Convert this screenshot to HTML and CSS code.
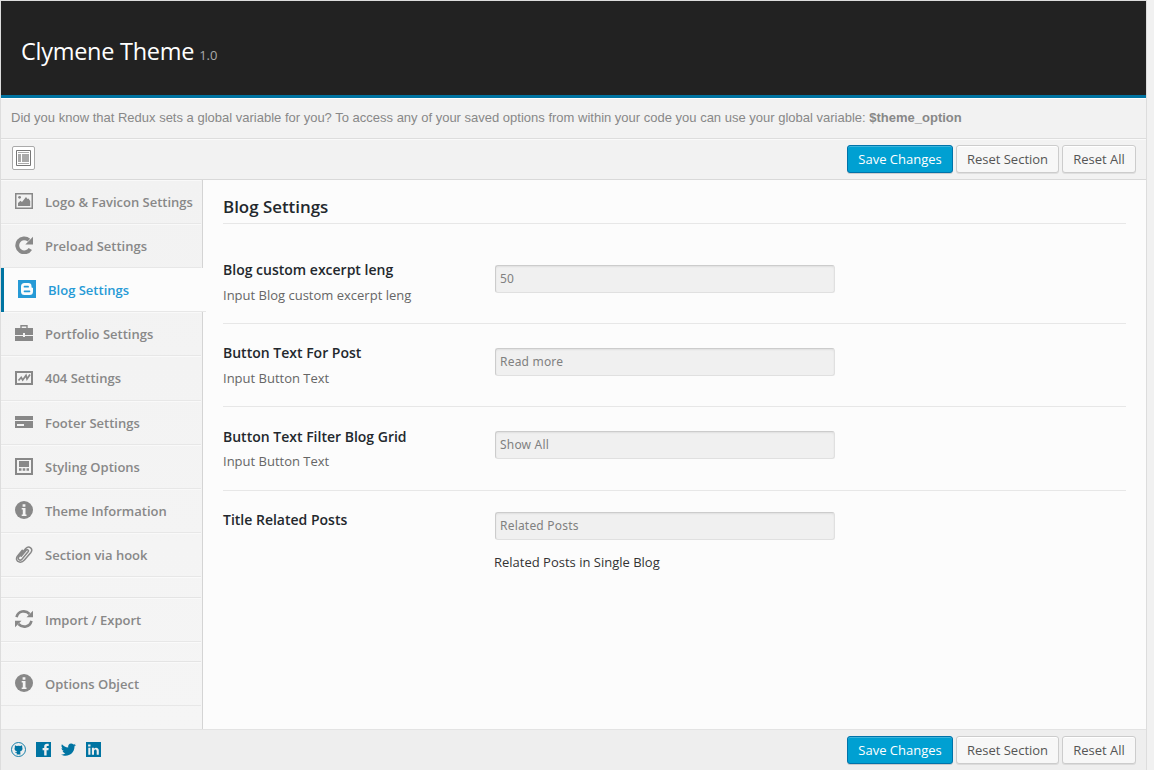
FILE: index.html
```html
<!DOCTYPE html>
<html lang="en">
<head>
<meta charset="utf-8">
<title>Clymene Theme</title>
<link rel="stylesheet" href="styles.css">
</head>
<body>
<svg class="defs" width="0" height="0">
  <symbol id="info" viewBox="0 0 18 18"><circle cx="9" cy="9" r="9" fill="currentColor"/><path d="M7.6 3.3h2.8v2.4H7.6zM6.7 7h3.8v6.5h1V15H6.7v-1.5h1.1V8.5H6.7z" fill="#f4f4f4"/></symbol>
</svg>
<div class="panel">
  <header class="header"><h1 class="title">Clymene Theme</h1><span class="version">1.0</span></header>
  <div class="notice">Did you know that Redux sets a global variable for you? To access any of your saved options from within your code you can use your global variable: <strong>$theme_option</strong></div>
  <div class="toolbar">
    <button class="expand" aria-label="Expand"><svg width="15" height="16" viewBox="0 0 15 16"><path d="M.5.5h14v15H.5z" fill="#fff" stroke="#777"/><path d="M2 2.5h11M2 13.5h11" stroke="#aaa"/><path d="M2 4h3v8H2zM6 4h7v8H6z" fill="#aaa"/></svg></button>
    <div class="actions"><button class="btn primary save">Save Changes</button><button class="btn section">Reset Section</button><button class="btn all">Reset All</button></div>
  </div>
  <div class="body">
    <nav class="sidebar">
      <a class="item"><svg class="icon" viewBox="0 0 18 18"><path d="M.75 1.75h16.5v14.5H.75z" fill="none" stroke="currentColor" stroke-width="1.5"/><circle cx="4.6" cy="5.3" r="1.4" fill="currentColor"/><path d="M3 14v-3l2.5-2.2L7 10l4-5 1.5 2 1-.5L15.200 9v5z" fill="currentColor"/></svg>Logo &amp; Favicon Settings</a>
      <a class="item"><svg class="icon" viewBox="0 0 18 18"><path d="M15.300 12.900A7 7 0 1 1 13.900 4.100" fill="none" stroke="currentColor" stroke-width="3.900"/><path d="M18 .8v7.700h-7.700z" fill="currentColor"/></svg>Preload Settings</a>
      <a class="item active"><svg class="icon" viewBox="0 0 18 18"><path d="M0 0h18v18H0z" fill="currentColor"/><path d="M6.500 3h3.800a3.200 3.200 0 0 1 3.200 3.200c0 1.300.2 1.600 1.100 1.600.4 0 .4.300.4.700v3a3.500 3.500 0 0 1-3.500 3.500h-5A3.500 3.500 0 0 1 3 11.500v-5A3.500 3.500 0 0 1 6.500 3z" fill="#fcfcfc"/><path d="M6.500 6.700h3.600M6.500 11.300h5" stroke="currentColor" stroke-width="1.700" stroke-linecap="round"/></svg>Blog Settings</a>
      <a class="item"><svg class="icon" viewBox="0 0 18 18"><path d="M6 4V1.700h6V4" fill="none" stroke="currentColor" stroke-width="1.400"/><path d="M0 4h18v7h-8V9H8v2H0zM0 12h8v1h2v-1h8v5H0z" fill="currentColor"/></svg>Portfolio Settings</a>
      <a class="item tall"><svg class="icon" viewBox="0 0 18 18"><path d="M1 4h16v12H1z" fill="none" stroke="currentColor" stroke-width="2"/><path d="M3.500 12.500l2.700-3 1.500 2.500L11 7.500l1 3.500 3-4.500" fill="none" stroke="currentColor" stroke-width="1.700"/></svg>404 Settings</a>
      <a class="item"><svg class="icon" viewBox="0 0 18 18"><path d="M0 3h18v4H0zM0 8h18v7H0z" fill="currentColor"/><path d="M2 11h7v2H2z" fill="#f4f4f4"/></svg>Footer Settings</a>
      <a class="item"><svg class="icon" viewBox="0 0 18 18"><path d="M1 2h16v15H1z" fill="none" stroke="currentColor" stroke-width="2"/><path d="M4 4h10v6H4zM4 11.300h2.500v2.400H4zM7.700 11.300h2.600v2.400H7.700zM11.500 11.300H14v2.400h-2.500z" fill="currentColor"/></svg>Styling Options</a>
      <a class="item"><svg class="icon"><use href="#info"/></svg>Theme Information</a>
      <a class="item"><svg class="icon" viewBox="0 0 18 18"><path d="M6.200 11.300l5-6c1.300-1.500 3 .1 1.900 1.500l-6.200 7.400c-2 2.200-4.700-.2-3-2.500l6.800-8.200c3.300-3.600 8 .4 5 4.200L9.400 15c-3.300 3.800-7.300 1.700-7.700-.2-.5-1.500.1-2.900.9-3.900l4.700-5.600" fill="none" stroke="currentColor" stroke-width="1.500" stroke-linecap="round"/></svg>Section via hook</a>
      <div class="divider"></div>
      <a class="item"><svg class="icon" viewBox="0 0 18 18"><path d="M1.500 7.200C3.200.7 10.500-.2 14.500 4M16.500 10.800C14.800 17.300 7.500 18.200 3.500 14" fill="none" stroke="currentColor" stroke-width="2.600"/><path d="M18 .7v6.500h-6.500zM0 17.300v-6.500h6.500z" fill="currentColor"/></svg>Import / Export</a>
      <div class="divider short"></div>
      <a class="item"><svg class="icon"><use href="#info"/></svg>Options Object</a>
    </nav>
    <main class="main">
      <h2 class="heading">Blog Settings</h2>
      <section class="field first"><div class="label"><h3>Blog custom excerpt leng</h3><p>Input Blog custom excerpt leng</p></div><div class="control"><input value="50"></div></section>
      <section class="field"><div class="label"><h3>Button Text For Post</h3><p>Input Button Text</p></div><div class="control"><input value="Read more"></div></section>
      <section class="field third"><div class="label"><h3>Button Text Filter Blog Grid</h3><p>Input Button Text</p></div><div class="control"><input value="Show All"></div></section>
      <section class="field last"><div class="label"><h3>Title Related Posts</h3></div><div class="control"><input value="Related Posts"><p class="desc">Related Posts in Single Blog</p></div></section>
    </main>
  </div>
  <footer class="footer">
    <div class="social">
      <svg viewBox="0 0 15 15"><circle cx="7.500" cy="7.500" r="7" fill="none" stroke="currentColor" stroke-width=".9"/><path d="M4 3.300l1.700.7a7 7 0 0 1 3.600 0l1.700-.7c.3.700.3 1.300.2 1.800.8 2.100.2 4-2.100 4.400.3.500.3 1 .3 2.900H5.700v-1.500c-1 .2-1.500-.4-1.900-1.100.8.100 1.200.6 1.900.4 0-.3.100-.5.300-.7-2.400-.4-2.900-2.400-2.100-4.400-.2-.5-.1-1.100.1-1.800z" fill="currentColor"/></svg>
      <svg viewBox="0 0 15 15"><path d="M0 0h15v15H0z" fill="currentColor"/><path d="M8.200 13.500V8.200H6.600V6h1.600V4.700C8.200 2.700 9.300 1.800 11 1.800h1.700V4h-1.100c-.8 0-1 .4-1 1v1h2.100l-.3 2.200h-1.800v5.300z" fill="#eee"/></svg>
      <svg viewBox="0 0 15 15"><path d="M15 2.700c-.5.800-.9 1.200-1.500 1.600C13.600 10 9.300 13.800 4.700 13.800c-1.700 0-3.300-.500-4.700-1.300 1.700.1 3.100-.3 4.400-1.300-1.400-.1-2.400-.9-2.800-2.100h1.300C1.500 8.700.6 7.600.5 6.100l1.300.3C.5 5.400.1 3.900.9 2.300c1.700 1.900 3.700 3 6.300 3.200C6.700 3.300 8 1.500 10.200 1.500c.9 0 1.700.4 2.200.9l2-.700-1.300 1.500z" fill="currentColor"/></svg>
      <svg viewBox="0 0 15 15"><path d="M0 0h15v15H0z" fill="currentColor"/><path d="M2.300 5.800h2.100v6.900H2.300zM2.100 2.500h2.400v2H2.100zM5.900 5.800h2v1c1.200-1.800 4.900-1.500 4.900 1.700v4.200h-2.100V9.200c0-2.200-2.700-2.100-2.700 0v3.500H5.900z" fill="#eee"/></svg>
    </div>
    <div class="actions"><button class="btn primary save">Save Changes</button><button class="btn section">Reset Section</button><button class="btn all">Reset All</button></div>
  </footer>
</div>
</body>
</html>
```
FILE: styles.css
```css
* { box-sizing: border-box; }
body { margin: 0; height: 770px; overflow: hidden; background: #f1f1f1; font-family: "Open Sans", sans-serif; font-size: 13px; }
h1, h2, h3, p { margin: 0; }
.defs { position: absolute; }
.panel { width: 1147px; height: 771px; border: 1px solid #ddd; }
.header { height: 97px; display: flex; align-items: baseline; padding: 34px 20px 0; background: #222; border-bottom: 3px solid #0074a2; }
.title { font-size: 23.5px; line-height: 33px; font-weight: 400; color: #fff; letter-spacing: -.27px; }
.version { margin-left: 5px; font-size: 13px; color: #aaa; }
.notice { height: 41px; padding: 0 10px; line-height: 37px; background: #f2f2f2; border-top: 1px solid #fff; border-bottom: 1px solid #ddd; font-family: "Liberation Sans", Arial, sans-serif; font-size: 13px; color: #888; white-space: nowrap; }
.toolbar { height: 41px; display: flex; justify-content: space-between; padding: 6px 10px 0 11px; background: #f2f2f2; border-top: 1px solid #fafafa; border-bottom: 1px solid #d9d9d9; }
.expand { width: 23px; height: 24px; padding: 0 0 0 3px; background: #fff; border: 1px solid #aaa; border-radius: 2px; }
.expand svg { display: block; }
.actions { display: flex; gap: 3px; margin-top: -1px; }
.btn { height: 28px; padding: 0; border: 1px solid #ccc; border-radius: 3px; background: #f7f7f7; box-shadow: inset 0 1px 0 #fff, 0 1px 0 rgba(0,0,0,.08); color: #555; font: 13px/26px "Open Sans", sans-serif; white-space: nowrap; }
.primary { background: #00a0d2; border-color: #0073aa; color: #fff; box-shadow: inset 0 1px 0 rgba(120,200,230,.5), 0 1px 0 rgba(0,0,0,.15); }
.save { width: 106px; }
.section { width: 103px; }
.all { width: 74px; }
.body { height: 549px; display: flex; background: #fcfcfc; }
.sidebar { width: 202px; padding-right: 1px; background: linear-gradient(#f2f2f2, #f5f5f5); border-right: 1px solid #d4d4d4; }
.item { height: 44px; display: flex; align-items: flex-start; padding: 11px 0 0 14px; border-top: 1px solid #f9f9f9; border-bottom: 1px solid #e7e7e7; color: #888; font-size: 13px; line-height: 20px; font-weight: 600; white-space: nowrap; }
.icon { width: 18px; height: 18px; flex: none; margin-right: 12px; }
.tall { height: 45px; }
.active { width: 205px; padding: 12px 0 0 17px; border: 0; background: #fcfcfc; box-shadow: inset 3px 0 #0074a2, inset 0 -1px #e7e7e7; color: #269ad6; }
.divider { height: 21px; border-top: 1px solid #fafafa; border-bottom: 1px solid #e4e4e4; }
.short { height: 20px; }
.main { flex: 1; padding: 0 20px; }
.heading { height: 44px; padding-top: 15px; border-bottom: 1px solid #e7e7e7; color: #23282d; font-size: 16.900px; line-height: 24px; font-weight: 600; }
.field { height: 83px; display: flex; border-bottom: 1px solid #e7e7e7; padding-top: 17px; }
.first { height: 100px; padding-top: 34px; }
.third { height: 84px; }
.third h3 { padding-top: 1px; margin-bottom: -1px; }
.last { border: 0; }
.label { width: 272px; color: #666; }
.label h3 { color: #23282d; font-size: 14px; line-height: 23px; font-weight: 600; }
.label p { padding-top: 3px; line-height: 22px; }
.control { padding-top: 7px; }
.control input { display: block; width: 340px; height: 28px; margin: 0; padding: 0 4px 1px; border: 1px solid #e0e0e0; border-top-color: #ccc; border-left-color: #ccc; border-radius: 3px; background: #f0f0f0; box-shadow: inset 0 1px 2px rgba(0,0,0,.07); color: #808080; font: 12px "Noto Sans", "Open Sans", sans-serif; letter-spacing: .2px; }
.last .control { padding-top: 4px; }
.desc { margin: 12px 0 0 -1px; line-height: 20px; color: #333; }
.footer { height: 42px; display: flex; justify-content: space-between; background: #eee; border-top: 1px solid #e3e3e3; padding: 7px 10px 0; }
.social { display: flex; gap: 10px; padding-top: 5px; color: #0074a2; }
.social svg { width: 15px; height: 15px; }
```
